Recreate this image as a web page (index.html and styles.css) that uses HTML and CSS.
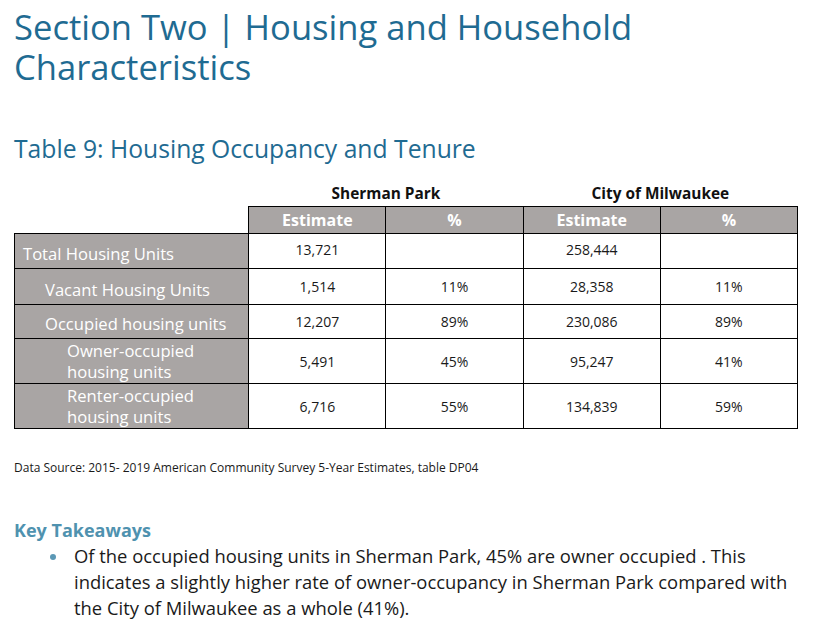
FILE: index.html
```html
<!DOCTYPE html>
<html>
<head>
<meta charset="utf-8">
<link rel="stylesheet" href="styles.css">
</head>
<body>
<div class="page">
  <h1 class="section-title">Section Two | Housing and Household Characteristics</h1>
  <h2 class="table-title">Table 9: Housing Occupancy and Tenure</h2>
  <table class="data">
    <colgroup>
      <col class="c-label"><col class="c-num"><col class="c-num"><col class="c-num"><col class="c-num">
    </colgroup>
    <tr class="group-row">
      <td></td>
      <th colspan="2">Sherman Park</th>
      <th colspan="2">City of Milwaukee</th>
    </tr>
    <tr class="head-row">
      <td class="blank"></td>
      <th>Estimate</th><th>%</th><th>Estimate</th><th>%</th>
    </tr>
    <tr class="r1">
      <td class="label l0">Total Housing Units</td>
      <td class="num top">13,721</td><td class="num"></td><td class="num top">258,444</td><td class="num"></td>
    </tr>
    <tr class="r2">
      <td class="label l1">Vacant Housing Units</td>
      <td class="num">1,514</td><td class="num">11%</td><td class="num">28,358</td><td class="num">11%</td>
    </tr>
    <tr class="r3">
      <td class="label l1">Occupied housing units</td>
      <td class="num">12,207</td><td class="num">89%</td><td class="num">230,086</td><td class="num">89%</td>
    </tr>
    <tr class="r4">
      <td class="label l2">Owner-occupied<br>housing units</td>
      <td class="num">5,491</td><td class="num">45%</td><td class="num">95,247</td><td class="num">41%</td>
    </tr>
    <tr class="r5">
      <td class="label l2">Renter-occupied<br>housing units</td>
      <td class="num">6,716</td><td class="num">55%</td><td class="num">134,839</td><td class="num">59%</td>
    </tr>
  </table>
  <p class="source">Data Source: 2015- 2019 American Community Survey 5-Year Estimates, table DP04</p>
  <h3 class="takeaways">Key Takeaways</h3>
  <ul class="bullets">
    <li>Of the occupied housing units in Sherman Park, 45% are owner occupied . This indicates a slightly higher rate of owner-occupancy in Sherman Park compared with the City of Milwaukee as a whole (41%).</li>
  </ul>
</div>
</body>
</html>
```
FILE: styles.css
```css
html, body {
  margin: 0;
  padding: 0;
  background: #ffffff;
}
body {
  font-family: "Open Sans", "DejaVu Sans", sans-serif;
  color: #1a1a1a;
}
.page {
  padding: 0 0 0 14px;
}
.section-title {
  margin: 0;
  padding-top: 7px;
  font-weight: 400;
  font-size: 34.6px;
  line-height: 40px;
  color: #1f6b92;
  width: 650px;
}
.table-title {
  margin: 47px 0 0 0;
  font-weight: 400;
  font-size: 24.7px;
  line-height: 30px;
  color: #1f6b92;
}
.data {
  margin-top: 14px;
  border-collapse: collapse;
  table-layout: fixed;
  width: 784px;
}
.c-label { width: 234px; }
.c-num { width: 137px; }
.group-row th {
  font-size: 15.4px;
  font-weight: 700;
  color: #111;
  height: 26px;
  padding: 0 0 2px 0;
  vertical-align: bottom;
  text-align: center;
}
.head-row th {
  background: #a9a5a4;
  color: #ffffff;
  font-size: 16px;
  font-weight: 700;
  height: 26px;
  padding: 0;
  border: 1px solid #000;
  text-align: center;
}
.head-row .blank {
  border: none;
  border-bottom: 1px solid #000;
}
.data td.label,
.data td.num {
  border: 1px solid #000;
  padding: 0;
}
.label {
  background: #a9a5a4;
  color: #ffffff;
  font-size: 16.6px;
  line-height: 21px;
  vertical-align: bottom;
}
.l0 { padding-left: 8px !important; padding-bottom: 4px !important; }
.l1 { padding-left: 30px !important; padding-bottom: 4px !important; }
.l2 { padding-left: 52px !important; padding-bottom: 1px !important; }
.num {
  text-align: center;
  font-size: 14px;
  color: #1a1a1a;
  vertical-align: middle;
}
.num.top { vertical-align: top; padding-top: 6px !important; }
.r1 { height: 35px; }
.r2 { height: 36px; }
.r3 { height: 34px; }
.r4 { height: 45px; }
.r5 { height: 45px; }
.source {
  margin: 30px 0 0 0;
  font-size: 12px;
  line-height: 18px;
  color: #1a1a1a;
}
.takeaways {
  margin: 42px 0 0 0;
  font-size: 18px;
  line-height: 22px;
  font-weight: 700;
  color: #4f92af;
}
.bullets {
  margin: 2px 0 0 0;
  padding: 0 0 0 60px;
  list-style: none;
  width: 730px;
}
.bullets li {
  position: relative;
  font-size: 18.4px;
  line-height: 26px;
  color: #1a1a1a;
}
.bullets li::before {
  content: "";
  position: absolute;
  left: -24px;
  top: 11px;
  width: 6px;
  height: 6px;
  border-radius: 50%;
  background: #5b98b5;
}
```
